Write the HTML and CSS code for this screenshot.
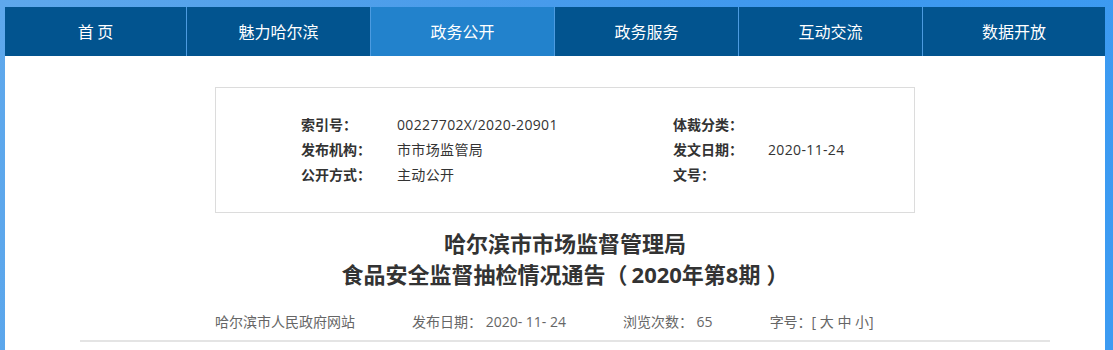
FILE: index.html
```html
<!DOCTYPE html>
<html lang="zh-CN">
<head>
<meta charset="utf-8">
<title>食品安全监督抽检情况通告</title>
<link rel="stylesheet" href="styles.css">
</head>
<body>
<div class="page">
  <ul class="nav">
    <li class="nav-item first">首 页</li>
    <li class="nav-item">魅力哈尔滨</li>
    <li class="nav-item active">政务公开</li>
    <li class="nav-item">政务服务</li>
    <li class="nav-item">互动交流</li>
    <li class="nav-item last">数据开放</li>
  </ul>
  <div class="content">
    <div class="info-box">
      <div class="info-grid">
        <div class="info-row"><span class="label">索引号：</span><span class="value">00227702X/2020-20901</span></div>
        <div class="info-row right"><span class="label">体裁分类：</span><span class="value"></span></div>
        <div class="info-row"><span class="label">发布机构：</span><span class="value">市市场监管局</span></div>
        <div class="info-row right"><span class="label">发文日期：</span><span class="value">2020-11-24</span></div>
        <div class="info-row"><span class="label">公开方式：</span><span class="value">主动公开</span></div>
        <div class="info-row right"><span class="label">文号：</span><span class="value"></span></div>
      </div>
    </div>
    <h1 class="title">哈尔滨市市场监督管理局<br>食品安全监督抽检情况通告<span class="paren-open">（</span>2020年第8期<span class="paren-close">）</span></h1>
    <div class="meta">
      <span class="meta-item">哈尔滨市人民政府网站</span>
      <span class="meta-item">发布日期： 2020- 11- 24</span>
      <span class="meta-item">浏览次数： 65</span>
      <span class="meta-item">字号：[ 大 中 小]</span>
    </div>
  </div>
</div>
</body>
</html>
```

FILE: styles.css
```css
html, body {
  margin: 0;
  padding: 0;
}
body {
  height: 350px;
  overflow: hidden;
  background: linear-gradient(100deg, #5ea8ec 0%, #4a9cea 40%, #3d98ef 70%, #3c9bf2 100%);
  font-family: "Open Sans", "Noto Sans CJK SC", sans-serif;
}
.page {
  margin: 7px 0 0 5px;
  width: 1100px;
  height: 343px;
  background: #ffffff;
}
.nav {
  display: flex;
  margin: 0;
  padding: 0;
  list-style: none;
  height: 49px;
  background: #02548f;
  overflow: hidden;
}
.nav-item {
  width: 183px;
  border-left: 1px solid #4c9be0;
  color: #ffffff;
  font-family: "Noto Sans CJK SC", sans-serif;
  font-size: 16px;
  line-height: 49px;
  text-align: center;
}
.nav-item.first {
  width: 181px;
  border-left: 0;
}
.nav-item.last {
  width: 182px;
}
.nav-item.active {
  background: #2282cc;
}
.content {
  margin-left: 75px;
  width: 970px;
  padding-top: 31px;
}
.info-box {
  width: 698px;
  margin: 0 auto;
  border: 1px solid #dcdcdc;
  padding: 24px 0 25px 0;
}
.info-grid {
  display: grid;
  grid-template-columns: 372px 1fr;
  padding-left: 85px;
}
.info-row {
  display: flex;
  height: 25px;
  line-height: 25px;
  font-size: 14px;
  color: #333333;
}
.label {
  width: 96px;
  font-weight: bold;
  font-family: "Noto Sans CJK TC", sans-serif;
}
.info-row.right .label {
  width: 95px;
}
.value {
  color: #333333;
  letter-spacing: 0.35px;
}
.title {
  margin: 15px 0 0 0;
  text-align: center;
  font-size: 22px;
  line-height: 31px;
  font-weight: bold;
  color: #333333;
}
.paren-open {
  margin-right: 4px;
}
.paren-close {
  margin-left: 6px;
}
.meta {
  display: flex;
  gap: 57px;
  margin-top: 17px;
  padding-left: 135px;
  height: 33px;
  line-height: 30px;
  font-size: 14px;
  color: #666666;
  border-bottom: 2px solid #e4e4e4;
  box-sizing: content-box;
}
```
